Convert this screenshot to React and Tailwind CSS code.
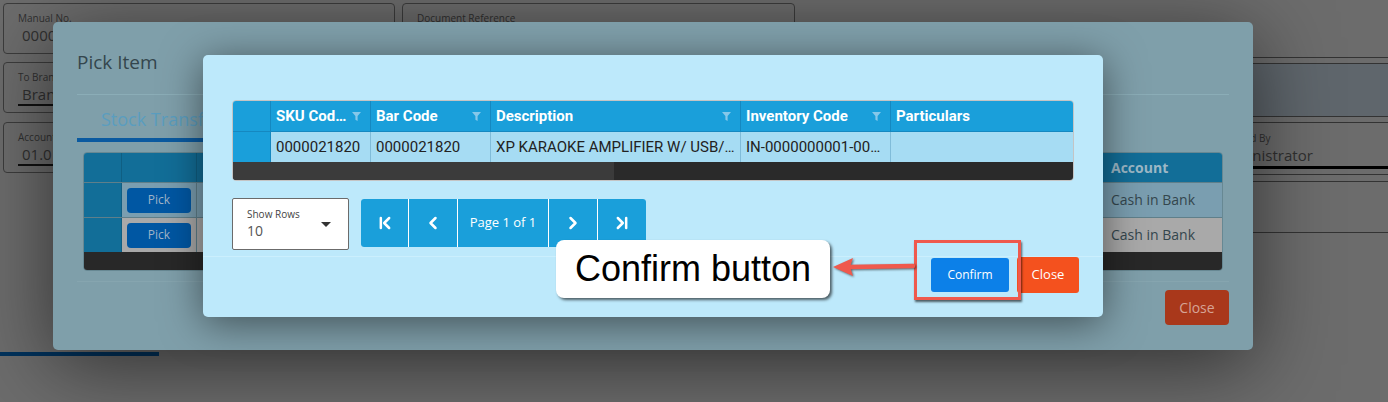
import React from 'react';
import { ChevronFirst, ChevronLeft, ChevronRight, ChevronLast } from 'lucide-react';

const itemCols = [
  { label: 'SKU Cod...', value: '0000021820', w: 'w-[100px]', pad: 'pr-[6px]', filter: true },
  { label: 'Bar Code', value: '0000021820', w: 'w-[120px]', pad: 'pr-[6px]', filter: true },
  { label: 'Description', value: 'XP KARAOKE AMPLIFIER W/ USB/BLUETOOTH', w: 'w-[250px]', pad: 'pr-[2px]', filter: true },
  { label: 'Inventory Code', value: 'IN-0000000001-0001', w: 'w-[150px]', pad: 'pr-[8px]', filter: true },
  { label: 'Particulars', value: '', w: 'flex-1', pad: 'pr-[6px]', filter: false },
];

const transferRows = [
  { bg: 'bg-[#7a9eb0]', account: 'Cash in Bank' },
  { bg: 'bg-[#a9a9a9]', account: 'Cash in Bank' },
];

function Funnel() {
  return (
    <svg width="9" height="9" viewBox="0 0 9 9" className="shrink-0">
      <path d="M0 0h9L5.6 4v5L3.4 7.8V4z" fill="#86c8ea" />
    </svg>
  );
}

function Field({ label, value, underline = true, className = '' }) {
  return (
    <div className={`h-[51px] rounded-[4px] border border-[#3c3c3c] px-[14px] pt-[7px] ${className}`}>
      <div className="text-[10px] leading-[14px] text-[#303030]">{label}</div>
      {value && (
        <div className={`pl-[4px] text-[15px] leading-[20px] text-[#303030] whitespace-nowrap ${underline ? 'border-b-2 border-[#111]' : ''}`}>
          {value}
        </div>
      )}
    </div>
  );
}

export default function App() {
  return (
    <div className="relative w-[1388px] h-[402px] overflow-hidden bg-[#6c6c6c] font-['Open_Sans',sans-serif]">
      {/* page behind the dialogs */}
      <div className="flex flex-col">
        <div className="flex h-[240px]">
          <div className="flex w-[392px] flex-col gap-[8px] pl-[3px] pt-[3px]">
            <Field label="Manual No." value="000001" underline={false} className="w-[392px]" />
            <Field label="To Branch" value="Branch 2 - Main" className="w-[392px]" />
            <Field label="Account" value="01.01.01 - Cash in Bank" className="w-[392px] mt-px" />
          </div>
          <div className="ml-[10px] pt-[3px]">
            <Field label="Document Reference" value="" className="w-[393px]" />
          </div>
          <div className="ml-[7px] flex flex-1 flex-col pt-[57px]">
            <div className="border-y border-[#333] h-[7px]" />
            <div className="h-[52px] bg-[#5f666c]" />
            <div className="border-y border-[#333] h-[7px]" />
            <div className="flex">
              <div className="ml-[409px] w-[180px] pt-[8px]">
                <div className="text-[10px] leading-[14px] text-[#303030]">Approved By</div>
                <div className="border-b-[3px] border-black pl-[5px] text-[15px] leading-[21px] text-[#303030]">Administrator</div>
              </div>
              <div className="flex-1 border-b-[3px] border-black mt-[43px]" />
            </div>
            <div className="mt-[5px] border-y border-[#333] h-[8px]" />
            <div className="h-[51px] border-b border-[#333]" />
          </div>
        </div>
        <div className="mt-[112px] h-[4px] w-[159px] bg-[#00325c]" />
      </div>

      {/* Pick Item dialog */}
      <div className="absolute left-[53px] top-[22px] flex h-[328px] w-[1200px] flex-col rounded-[5px] bg-[#7f9faa] shadow-[0_15px_80px_rgba(0,0,0,0.55)]">
        <div className="mx-6 h-[73px] border-b border-[#8badb7] pt-[27px]">
          <h2 className="text-[19px] leading-[26px] text-[#34464d]">Pick Item</h2>
        </div>
        <div className="px-6">
          <div className="w-[150px] border-b-4 border-[#0a5aa0] pt-[12px] pb-[7px] pl-[24px] text-[18px] leading-[24px] text-[#5a9dbf] whitespace-nowrap">
            Stock Transfer
          </div>
          <div className="mx-[6px] mt-[10px] overflow-hidden rounded-[4px] border border-[#678893]">
            <div className="flex h-[29px] bg-[#126e98] text-[14px] font-bold text-[#9cb8c6]">
              <div className="w-[38px] border-r border-[#0f5f83]" />
              <div className="w-[75px] border-r border-[#0f5f83]" />
              <div className="flex-1 border-r border-[#0f5f83] px-[6px] leading-[29px]">SKU Code</div>
              <div className="w-[119px] px-[8px] leading-[29px]">Account</div>
            </div>
            {transferRows.map((r, i) => (
              <div key={i} className="flex h-[35px] border-t border-[#5f7f8a] text-[14px] text-[#34464d]">
                <div className="w-[38px] border-r border-[#0f5f83] bg-[#126e98]" />
                <div className={`flex w-[75px] items-center justify-center border-r border-[#5f7f8a] ${r.bg}`}>
                  <button className="h-[25px] w-[64px] rounded-[4px] bg-[#0057a3] text-[12px] text-[#a0b4c8]">Pick</button>
                </div>
                <div className={`flex-1 border-r border-[#5f7f8a] ${r.bg}`} />
                <div className={`w-[119px] px-[8px] leading-[34px] ${r.bg}`}>{r.account}</div>
              </div>
            ))}
            <div className="h-[18px] bg-[#282828]" />
          </div>
        </div>
        <div className="mx-6 mt-[10px] flex justify-end border-t border-[#86a5af] pt-[8px]">
          <button className="h-[35px] w-[64px] rounded-[4px] bg-[#a9381b] text-[14px] text-[#d6a496]">Close</button>
        </div>
      </div>

      {/* Item list dialog */}
      <div className="absolute left-[203px] top-[55px] flex h-[262px] w-[900px] flex-col rounded-[5px] bg-[#bde9fb] shadow-[0_6px_40px_rgba(0,0,0,0.5)]">
        <div className="px-[29px] pt-[45px] pb-[6px]">
          <div className="overflow-hidden rounded-[4px] border border-[#c4c4c4] font-['Roboto',sans-serif]">
            <div className="flex h-[31px] border-b border-[#1588c0] bg-[#1a9fda] text-[15px] font-bold text-white">
              <div className="w-[38px] border-r border-[#1588c0]" />
              {itemCols.map((c) => (
                <div key={c.label} className={`${c.w} flex items-center justify-between gap-1 border-r border-[#1588c0] pl-[5px] pr-[9px] last:border-r-0`}>
                  <span className="truncate">{c.label}</span>
                  {c.filter && <Funnel />}
                </div>
              ))}
            </div>
            <div className="flex h-[30px] text-[15px] text-[#222]">
              <div className="w-[38px] border-r border-[#1588c0] bg-[#1a9fda]" />
              {itemCols.map((c) => (
                <div key={c.label} className={`${c.w} ${c.pad} truncate border-r border-[#80bcd9] bg-[#a6dcf3] pl-[5px] leading-[30px] last:border-r-0`}>
                  {c.value}
                </div>
              ))}
            </div>
            <div className="h-[18px] bg-[#2a2a2a]">
              <div className="h-full w-[381px] bg-[#3b3b3b]" />
            </div>
          </div>
          <div className="mt-[17px] flex items-start gap-[12px]">
            <div className="flex h-[52px] w-[117px] items-center justify-between rounded-[2px] border border-[#6b6b6b] bg-white pl-[14px] pr-[17px]">
              <div className="text-[#444]">
                <div className="text-[10px] leading-[13px]">Show Rows</div>
                <div className="text-[14px] leading-[20px] text-[#555]">10</div>
              </div>
              <div className="h-0 w-0 border-x-[5px] border-t-[5px] border-x-transparent border-t-[#333]" />
            </div>
            <div className="mt-px flex h-[48px] overflow-hidden rounded-[3px] bg-white text-white">
              <button className="flex w-[47px] items-center justify-center bg-[#1a9fda]"><ChevronFirst size={20} strokeWidth={3} /></button>
              <button className="ml-px flex w-[48px] items-center justify-center bg-[#1a9fda]"><ChevronLeft size={20} strokeWidth={3} /></button>
              <div className="ml-px flex w-[90px] items-center justify-center bg-[#1a9fda] text-[13px]">Page 1 of 1</div>
              <button className="ml-px flex w-[48px] items-center justify-center bg-[#1a9fda]"><ChevronRight size={20} strokeWidth={3} /></button>
              <button className="ml-px flex w-[48px] items-center justify-center bg-[#1a9fda]"><ChevronLast size={20} strokeWidth={3} /></button>
            </div>
          </div>
        </div>
        <div className="flex flex-1 items-start justify-end gap-[8px] border-t border-[#cbeffd] pr-[24px]">
          <button className="mt-px h-[34px] w-[78px] rounded-[3px] bg-[#0c80e8] text-[12px] text-white">Confirm</button>
          <button className="h-[36px] w-[62px] rounded-[3px] bg-[#f4511e] text-[13px] text-white">Close</button>
        </div>
      </div>

      {/* annotation */}
      <div className="absolute left-[914px] top-[240px] h-[60px] w-[107px] border-[3px] border-[#ef594d] shadow-[1px_2px_2px_rgba(0,0,0,0.6)]" />
      <svg className="absolute left-[830px] top-[255px] drop-shadow-[1px_1px_1px_rgba(0,0,0,0.55)]" width="88" height="24" viewBox="0 0 88 24">
        <path d="M3 12 L23 3 L20 12 L23 21 Z" fill="#ef594d" />
        <path d="M19 12 L83 11" stroke="#ef594d" strokeWidth="4.5" strokeLinecap="round" />
      </svg>
      <div className="absolute left-[556px] top-[240px] flex h-[58px] w-[274px] items-center rounded-[8px] bg-white pl-[19px] font-['Liberation_Sans',sans-serif] text-[36px] text-black shadow-[2px_2px_3px_rgba(0,0,0,0.6)] whitespace-nowrap">
        Confirm button
      </div>
    </div>
  );
}
